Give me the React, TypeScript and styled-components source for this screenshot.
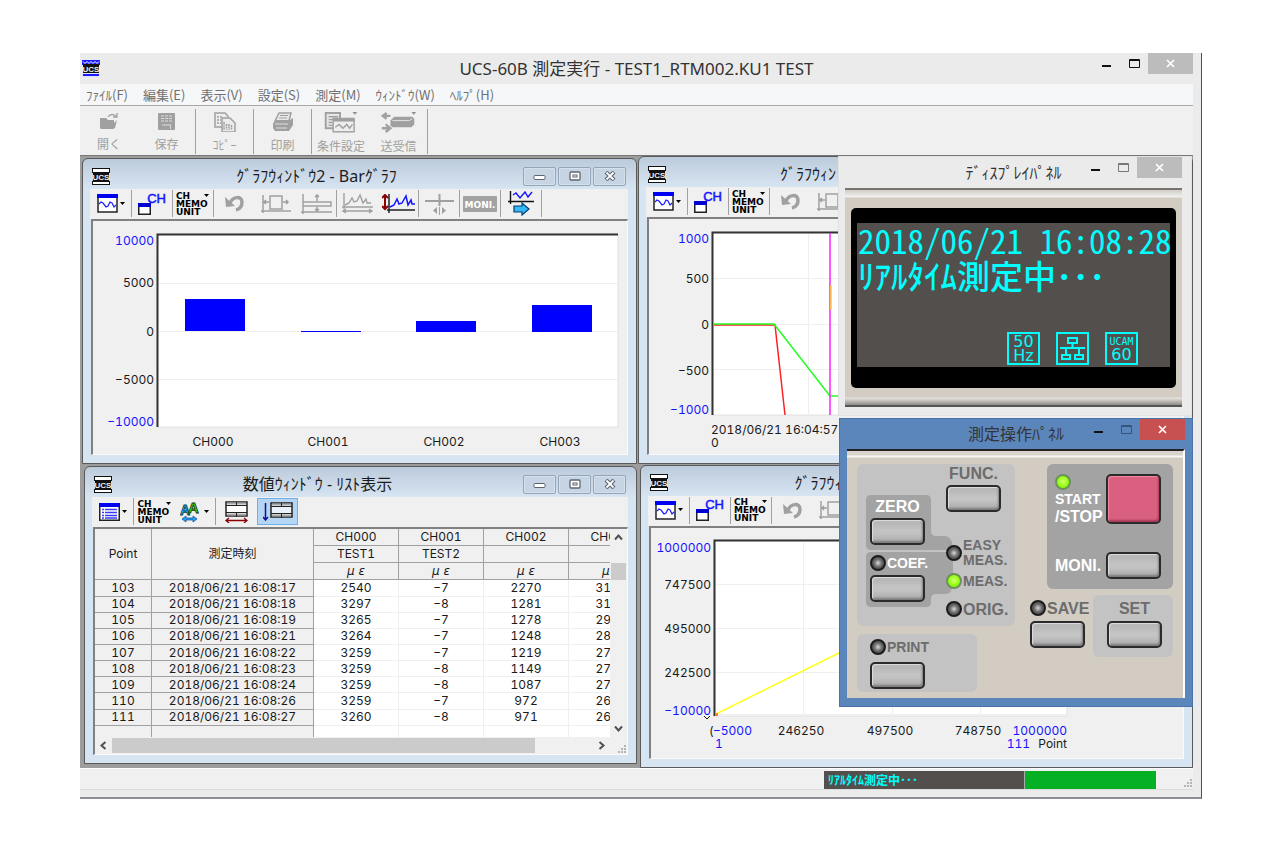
import React from "react";
import styled, { createGlobalStyle, css } from "styled-components";

const UI = `"Noto Sans", "Noto Sans CJK JP", sans-serif`;
const JP = `"Noto Sans CJK JP", sans-serif`;
const DATA = `Inter, "Noto Sans CJK JP", sans-serif`;
const LABEL = `"Liberation Sans", Arial, sans-serif`;

const GlobalStyle = createGlobalStyle`
  * { box-sizing: border-box; }
  body { margin: 0; background: #fff; font-family: ${UI}; color: #222; }
  button { margin: 0; padding: 0; border: 0; background: none; font: inherit; color: inherit; }
  svg { display: block; }
`;

/* ---------- application frame ---------- */

const Page = styled.div`
  min-height: 100vh;
  padding: 53px 82px 57px 80px;
  display: flex;
`;

const AppWindow = styled.div`
  position: relative;
  flex: 1;
  min-width: 0;
  display: flex;
  flex-direction: column;
  background: #ebebeb;
  border-right: 1px solid #4c4f58;
  border-bottom: 2px solid #8b8e95;
  padding: 0 8px 7px 0;
`;

const TitleBar = styled.header`
  display: grid;
  grid-template-columns: 1fr auto 1fr;
  height: 31px;
  flex: none;
`;

const TitleText = styled.h1<{ $size?: number }>`
  margin: 0;
  align-self: center;
  font: 400 ${(p) => p.$size ?? 17}px/24px ${UI};
  color: #333;
  white-space: nowrap;
`;

const TitleIcon = styled.div`
  align-self: center;
  padding-left: 2px;
`;

const Caption = styled.div`
  display: flex;
  justify-content: flex-end;
  align-items: flex-start;
`;

const CaptionButton = styled.button<{ $close?: string; $tone?: string }>`
  width: ${(p) => (p.$close ? 45 : 28)}px;
  height: 21px;
  display: grid;
  place-items: center;
  background: ${(p) => p.$close ?? "transparent"};
  color: ${(p) => (p.$close ? "#fff" : p.$tone ?? "#111")};
`;

const MenuBar = styled.nav`
  display: flex;
  gap: 15px;
  height: 21px;
  flex: none;
  padding-left: 6px;
  background: #f5f7f9;
`;

const MenuItem = styled.button`
  font: 13px/20px ${JP};
  color: #707070;
  white-space: nowrap;
`;

const MainToolbar = styled.div`
  display: flex;
  align-items: stretch;
  height: 50px;
  flex: none;
  padding: 3px 0 1px;
  background: #f0f0f0;
  border-top: 1px solid #a9a9a9;
`;

const MainTool = styled.button<{ $sep?: boolean }>`
  width: 58px;
  display: flex;
  flex-direction: column;
  align-items: center;
  border-right: ${(p) => (p.$sep ? "1px solid #a0a0a0" : "0")};
  font: 12px/16px ${JP};
  color: #a0a0a0;
  white-space: nowrap;
  svg { margin: 3px 0 5px; }
`;

/* ---------- child windows ---------- */

const Workspace = styled.main`
  flex: 1;
  display: flex;
  min-height: 560px;
  background: #9d9d9d;
  border-top: 1px solid #777;
`;

const Column = styled.div<{ $inset?: boolean }>`
  flex: 1 1 0;
  min-width: 0;
  display: flex;
  flex-direction: column;
  gap: ${(p) => (p.$inset ? 2 : 1)}px;
  padding: ${(p) => (p.$inset ? "2px 1px 4px 2px" : "0")};
`;

const ChildFrame = styled.section<{ $indent?: boolean; $grow: number }>`
  flex: ${(p) => p.$grow} 1 0;
  min-height: 0;
  margin-left: ${(p) => (p.$indent ? 2 : 0)}px;
  display: flex;
  flex-direction: column;
  border: 1px solid #5a5a5a;
  border-radius: 6px 6px 0 0;
  padding: 0 8px 8px 7px;
  background: linear-gradient(#bccbdb, #d7e4f2 30px);
  overflow: hidden;
`;

const ChildTitle = styled.div`
  display: flex;
  align-items: center;
  height: 30px;
  flex: none;
  padding: 4px 2px 0 2px;
`;

const ChildTitleText = styled.h2`
  flex: 1;
  margin: 0;
  text-align: center;
  font: 400 16px/22px ${UI};
  color: #1c1c1c;
  white-space: nowrap;
`;

const ChildButtons = styled.div`
  display: flex;
  gap: 2px;
`;

const ChildButton = styled.button`
  width: 33px;
  height: 19px;
  display: grid;
  place-items: center;
  border: 1px solid #93a5ba;
  border-radius: 2px;
  background: #c6d4e4;
  box-shadow: inset 0 0 0 1px #d6e1ed;
`;

const ToolStrip = styled.div`
  display: flex;
  height: 30px;
  flex: none;
  padding: 1px 0 2px 1px;
  background: #f0f0f0;
`;

const Tool = styled.button<{ $sep?: boolean; $active?: boolean }>`
  flex: none;
  width: 41px;
  display: flex;
  align-items: center;
  justify-content: center;
  border-right: ${(p) => (p.$sep ? "1px solid #a0a0a0" : "0")};
  ${(p) =>
    p.$active &&
    css`
      background: #b5d5f5;
      border: 1px solid #6fb0ea;
    `}
`;

const UnitLabel = styled.span`
  width: 34px;
  font: 700 9px/8px "DejaVu Sans", sans-serif;
  color: #000;
  text-align: left;
  span { display: flex; justify-content: space-between; align-items: center; }
`;

const Client = styled.div`
  flex: 1;
  min-height: 0;
  margin-left: 1px;
  overflow: hidden;
  background: #f0f0f0;
  border: 1px solid #fafafa;
  border-top: 2px solid #808080;
  border-left: 2px solid #808080;
`;

/* ---------- table ---------- */

const ListArea = styled.div`
  height: 100%;
  display: grid;
  grid-template-columns: 1fr 17px;
  grid-template-rows: 1fr 17px;
`;

const TableClip = styled.div`
  overflow: hidden;
  min-width: 0;
  min-height: 0;
`;

const Table = styled.table`
  table-layout: fixed;
  width: 559px;
  height: 100%;
  border-collapse: separate;
  border-spacing: 0;
  background: #fff;
  font: 12px/14px ${DATA};
  font-variant-numeric: tabular-nums;
  color: #1a1a1a;
  th, td {
    padding: 0;
    height: 16px;
    font-weight: 400;
    text-align: center;
    white-space: nowrap;
    border-right: 1px solid #efefef;
    border-bottom: 1px solid #efefef;
  }
  th {
    background: #f0f0f0;
    border-color: #a0a0a0;
  }
  thead th { height: 17px; }
  .filler > * { height: 11px; border-bottom: 0; }
`;

const Unit = styled.i`
  font: italic 12px/14px "DejaVu Sans", sans-serif;
  white-space: pre;
`;

const Scroll = styled.div<{ $vertical?: boolean }>`
  display: flex;
  flex-direction: ${(p) => (p.$vertical ? "column" : "row")};
  background: #f0f0f0;
  color: #505050;
`;

const ScrollArrow = styled.button`
  width: 17px;
  height: 17px;
  flex: none;
  display: grid;
  place-items: center;
`;

const ScrollTrack = styled.div<{ $vertical?: boolean }>`
  flex: 1;
  padding: ${(p) => (p.$vertical ? "17px 1px 0" : "1px 0")};
`;

const ScrollThumb = styled.div<{ $vertical?: boolean }>`
  background: #cbcbcb;
  ${(p) => (p.$vertical ? "height: 17px;" : "height: 100%; width: 88%;")}
`;

/* ---------- status bar ---------- */

const StatusBar = styled.footer`
  display: flex;
  justify-content: flex-end;
  align-items: flex-end;
  height: 22px;
  flex: none;
  background: #f0f0f0;
  border-top: 1px solid #fff;
  border-bottom: 1px solid #dcdcdc;
`;

const StatusText = styled.div`
  width: 201px;
  height: 18px;
  padding-left: 4px;
  background: #524f4d;
  border-right: 1px solid #aaa;
  font: 700 12px/17px ${JP};
  color: #00ffff;
  white-space: nowrap;
`;

const StatusProgress = styled.div`
  width: 131px;
  height: 18px;
  background: #06b025;
`;

const GripSlot = styled.div`
  width: 37px;
  display: flex;
  justify-content: flex-end;
  padding-bottom: 1px;
`;

const GripCorner = styled.div`
  display: flex;
  justify-content: flex-end;
  align-items: flex-end;
`;

/* ---------- floating panels ---------- */

const FloatingPanel = styled.section<{ $top: number; $active?: boolean }>`
  position: absolute;
  top: ${(p) => p.$top}px;
  right: ${(p) => (p.$active ? 8 : 9)}px;
  width: 354px;
  padding: 0 ${(p) => (p.$active ? 7 : 9)}px 8px ${(p) => (p.$active ? 7 : 6)}px;
  background: ${(p) => (p.$active ? "#5b86bb" : "#ebebeb")};
  border: 1px solid ${(p) => (p.$active ? "#4a74a9" : "#e2e2e2")};
`;

const PanelTitle = styled(TitleBar)<{ $h: number }>`
  height: ${(p) => p.$h}px;
`;

const DisplayBody = styled.div`
  padding: 18px 6px 17px;
  background: linear-gradient(#cfccc6, #f2f1ee 7px, #d2ccc3 8px, #d2ccc3 calc(100% - 8px), #e6e3df calc(100% - 7px), #8d8983);
  border-top: 2px solid #77736d;
  border-bottom: 2px solid #555;
`;

const DisplayBezel = styled.div`
  padding: 15px 6px 21px;
  background: #000;
  border-radius: 5px;
`;

const DisplayScreen = styled.div`
  height: 144px;
  padding: 0 0 2px 1px;
  display: flex;
  flex-direction: column;
  background: #524f4d;
  color: #00ffff;
`;

const DisplayLine = styled.div`
  height: 35px;
  font: 400 33px/35px ${JP};
  font-feature-settings: "hwid";
  white-space: nowrap;
`;

const DisplayStatus = styled(DisplayLine)`
  font-weight: 500;
`;

const DisplayIcons = styled.div`
  margin-top: auto;
  padding-right: 32px;
  display: flex;
  justify-content: flex-end;
  gap: 16px;
`;

const DisplayIcon = styled.div`
  width: 33px;
  height: 33px;
  border: 2px solid #00ffff;
  display: flex;
  flex-direction: column;
  align-items: center;
  justify-content: center;
  font: 400 16px/14px "DejaVu Sans", sans-serif;
  small { font: 10px/12px "DejaVu Sans Mono", monospace; }
`;

const ControlBody = styled.div`
  display: flex;
  justify-content: space-between;
  align-items: flex-start;
  padding: 13px 10px 6px;
  background: linear-gradient(#d8d4cd 4px, #f6f5f2 5px, #f6f5f2 6px, #d2ccc3 7px);
  border-top: 2px solid #222;
  border-right: 2px solid #fff;
`;

const Stack = styled.div<{ $gap: number; $end?: boolean }>`
  display: flex;
  flex-direction: column;
  align-items: ${(p) => (p.$end ? "flex-end" : "flex-start")};
  gap: ${(p) => p.$gap}px;
`;

const FuncGroup = styled.div`
  position: relative;
  display: flex;
  width: 158px;
  height: 162px;
  padding-left: 9px;
  background: #c3c3c3;
  border-radius: 6px;
`;

const GroupShape = styled.svg`
  position: absolute;
  inset: 0;
`;

const ZeroCoef = styled.div`
  position: relative;
  width: 65px;
  padding: 34px 4px 0;
  display: flex;
  flex-direction: column;
  gap: 10px;
`;

const FuncColumn = styled.div`
  position: relative;
  flex: 1;
  padding: 1px 0 0 15px;
`;

const ModeList = styled.div`
  margin-top: 27px;
`;

const ModeRow = styled.div`
  display: flex;
  align-items: center;
  gap: 1px;
  height: 28px;
`;

const Field = styled.div<{ $gap?: number }>`
  display: flex;
  flex-direction: column;
  gap: ${(p) => p.$gap ?? 4}px;
  width: 55px;
`;

const FieldLabel = styled.div<{ $light?: boolean; $small?: boolean; $center?: boolean }>`
  display: flex;
  align-items: center;
  justify-content: ${(p) => (p.$center ? "center" : "flex-start")};
  gap: 1px;
  min-height: 16px;
  font: 700 ${(p) => (p.$small ? 14 : 16)}px/15px ${LABEL};
  color: ${(p) => (p.$light ? "#fff" : "#6c6c6c")};
  white-space: nowrap;
`;

const Led = styled.span<{ $on?: boolean }>`
  flex: none;
  width: 16px;
  height: 16px;
  border-radius: 50%;
  border: 2px solid ${(p) => (p.$on ? "#6f8f5c" : "#1c1c1c")};
  background: ${(p) =>
    p.$on
      ? "radial-gradient(circle at 50% 45%, #d8ff70, #8cff0a 60%)"
      : "radial-gradient(circle, #d8d8d8, #6c6c6c 45%, #3c3c3c 90%)"};
`;

const Key = styled.button<{ $red?: boolean }>`
  width: 55px;
  height: ${(p) => (p.$red ? 50 : 27)}px;
  border: 2px solid #2b2b2b;
  border-radius: 5px;
  background: ${(p) => (p.$red ? "#d9607f" : "linear-gradient(#b2b2b2, #c4c4c4 45%, #c2c2c2 60%, #a8a8a8)")};
  box-shadow: inset 1px 1px 1px ${(p) => (p.$red ? "#ee8ba2" : "#dedede")}, inset -1px -2px 2px ${(p) => (p.$red ? "#a83a58" : "#7d7d7d")};
`;

const PrintGroup = styled.div`
  width: 120px;
  padding: 5px 0 3px 13px;
  background: #c3c3c3;
  border-radius: 6px;
`;

const StartGroup = styled.div`
  width: 126px;
  height: 125px;
  padding: 10px 12px 10px 8px;
  display: flex;
  flex-direction: column;
  justify-content: space-between;
  background: #a3a3a3;
  border-radius: 6px;
`;

const StartRow = styled.div`
  display: flex;
  justify-content: space-between;
  align-items: center;
`;

const SaveSetRow = styled.div`
  display: flex;
  align-items: flex-start;
  gap: 8px;
`;

const SaveBox = styled.div`
  padding-top: 5px;
`;

const SetBox = styled.div`
  padding: 5px 11px 9px 14px;
  background: #c3c3c3;
  border-radius: 6px;
`;

/* ---------- icons ---------- */

const Logo = ({ color = "#fff" }: { color?: string }) => (
  <svg width="18" height="17" viewBox="0 0 18 17" aria-hidden="true">
    <rect x="0.5" y="0.5" width="17" height="4" fill={color} stroke={color === "#fff" ? "#111" : color} />
    <rect x="1" y="4" width="16" height="10" fill="#111" />
    <text x="9" y="12" textAnchor="middle" fontFamily="Liberation Sans" fontWeight="700" fontSize="8" fill="#eee">UCS</text>
    <rect x="0.5" y="13.5" width="17" height="3" fill={color} stroke={color === "#fff" ? "#111" : "#dfe3ff"} />
    {color !== "#fff" && <path d="M1 1.5l2 2 2-2 2 2 2-2 2 2 2-2 2 2 2-2" stroke="#fff" fill="none" />}
  </svg>
);

const MinGlyph = () => (
  <svg width="9" height="21" viewBox="0 0 9 21"><rect y="12" width="9" height="2" fill="#111" /></svg>
);
const MaxGlyph = () => (
  <svg width="11" height="9" viewBox="0 0 11 9"><path d="M.5 .5h10v8h-10zM.5 1.5h10" fill="none" stroke="currentColor" /></svg>
);
const CloseGlyph = () => (
  <svg width="9" height="9" viewBox="0 0 9 9"><path d="M1 1l7 7M8 1l-7 7" stroke="currentColor" strokeWidth="1.7" /></svg>
);

const Caret = ({ gap = 2 }: { gap?: number }) => (
  <svg width={6 + gap} height="4" viewBox={`${-gap} 0 ${6 + gap} 4`}><path d="M0 0h5L2.500 3z" fill="#000" /></svg>
);

const WaveWindowIcon = () => (
  <svg width="21" height="19" viewBox="0 0 21 19">
    <rect x="1" y="1" width="19" height="17" fill="#fff" stroke="#222" strokeWidth="1.500" />
    <rect x="0" y="0" width="21" height="4" fill="#0000f0" />
    <path d="M2 10l2-2 2 1 3 4 2-1 2-4 2 1 2 4 2-2" fill="none" stroke="#2222ff" strokeWidth="1.300" />
  </svg>
);

const ListWindowIcon = () => (
  <svg width="21" height="18" viewBox="0 0 21 18">
    <rect x=".75" y=".75" width="19.500" height="16.500" fill="#fff" stroke="#222" strokeWidth="1.500" />
    <rect width="21" height="4" fill="#0000f0" />
    <path d="M3 6.500h2m1 0h12M3 9.500h2m1 0h12M3 12.500h2m1 0h12M3 15h2m1 0h12" stroke="#3a3aff" strokeWidth="1.500" />
  </svg>
);

const ChannelIcon = () => (
  <svg width="28" height="24" viewBox="0 0 28 24">
    <rect x=".75" y="11.750" width="11.500" height="10.500" fill="#fff" stroke="#222" strokeWidth="1.500" />
    <rect x="0" y="11" width="13" height="4" fill="#0000d0" />
    <text x="28" y="11" textAnchor="end" fontFamily="Liberation Sans" fontSize="13" stroke="#1414ff" strokeWidth=".5" fill="#1414ff">CH</text>
  </svg>
);

const UndoIcon = () => (
  <svg width="20" height="17" viewBox="0 0 20 17">
    <path d="M5 8C8 1 17 1 17 7c0 4-2 7-6 8" fill="none" stroke="#a0a0a0" strokeWidth="3.500" />
    <path d="M0 2l1 10 9-1z" fill="#a0a0a0" />
  </svg>
);

const ExpandXIcon = () => (
  <svg width="30" height="20" viewBox="0 0 30 20" fill="none" stroke="#a0a0a0" strokeWidth="1.500">
    <path d="M2 1v18M0 17h30M9 2h12v13H9zM8 8H3m2-2l-2 2 2 2M22 8h5m-2-2l2 2-2 2" />
  </svg>
);

const ExpandYIcon = () => (
  <svg width="31" height="20" viewBox="0 0 31 20" fill="none" stroke="#a0a0a0" strokeWidth="1.500">
    <path d="M2 0v20M0 18h31M2 8h28v4H2zM16 7V1m-2 2l2-2 2 2M16 13v4m-2-2l2 2 2-2" />
  </svg>
);

const ScaleXIcon = () => (
  <svg width="32" height="21" viewBox="0 0 32 21" fill="none" stroke="#a0a0a0" strokeWidth="1.400">
    <path d="M2 0v16M0 14h31M3 12l4-2 3-5 2 4 3-1 3-6 3 8 3-4 1 4h4M1 18h29M4 16l-3 2 3 2M27 16l3 2-3 2" />
  </svg>
);

const ScaleYIcon = () => (
  <svg width="33" height="19" viewBox="0 0 33 19" fill="none" strokeWidth="1.500">
    <path d="M7 0v19M5 16h28" stroke="#222" />
    <path d="M3 1v14M0 4l3-3 3 3M0 12l3 3 3-3" stroke="#8b0000" strokeWidth="2" />
    <path d="M8 13l4-2 3-6 2 5 3-1 4-7 2 9 3-5 1 4h3" stroke="#1414ff" />
  </svg>
);

const CursorIcon = () => (
  <svg width="29" height="22" viewBox="0 0 29 22">
    <path d="M14.500 1v12M0 8h29" stroke="#a0a0a0" strokeWidth="2" />
    <path d="M14.500 14v8" stroke="#a0a0a0" />
    <path d="M12 14v7l-4-3.500zM17 14v7l4-3.500z" fill="#a0a0a0" />
  </svg>
);

const MoniIcon = () => (
  <svg width="34" height="16" viewBox="0 0 34 16">
    <rect width="34" height="16" rx="1" fill="#a3a3a3" />
    <text x="17" y="12" textAnchor="middle" fontFamily="DejaVu Sans" fontWeight="700" fontSize="9" fill="#fff">MONI.</text>
  </svg>
);

const WaveArrowIcon = () => (
  <svg width="26" height="25" viewBox="0 0 26 25">
    <path d="M2.500 0v13M0 10.500h26" stroke="#111" strokeWidth="1.400" />
    <path d="M5 4l3-2 4 5 5-6 3 5 4-5" fill="none" stroke="#1414ff" strokeWidth="1.400" />
    <path d="M6 15h8v-3l7 6-7 6v-3H6z" fill="#35b8f5" stroke="#003c78" strokeWidth="1.200" />
  </svg>
);

const FontSizeIcon = () => (
  <svg width="20" height="22" viewBox="0 0 20 22">
    <text x="0" y="14" fontFamily="Liberation Sans" fontWeight="700" fontSize="14" fill="#29b4ff" stroke="#003c50" strokeWidth=".8">A</text>
    <text x="8" y="12" fontFamily="Liberation Sans" fontWeight="700" fontSize="15" fill="#55d02a" stroke="#0a3c00" strokeWidth=".8">A</text>
    <path d="M2 18l4-3v2h7v-2l4 3-4 3v-2H6v2z" fill="#2a9df5" stroke="#004a90" strokeWidth=".7" />
  </svg>
);

const FitWidthIcon = () => (
  <svg width="23" height="22" viewBox="0 0 23 22">
    <rect x="1" y="1" width="21" height="14" fill="#fff" stroke="#222" strokeWidth="1.500" />
    <path d="M2 2.500h19M2 13.500h19" stroke="#aaa" strokeWidth="2" />
    <path d="M1 4.500h21M1 11.500h21M11.500 1v3M11.500 12v4" stroke="#222" />
    <path d="M1 19.500h21M4 17l-3 2.500L4 22M19 17l3 2.500-3 2.500" fill="none" stroke="#8b0000" strokeWidth="1.300" />
  </svg>
);

const FitHeightIcon = () => (
  <svg width="30" height="19" viewBox="0 0 30 19">
    <rect x="8" y="1" width="21" height="14" fill="#e9f2fb" stroke="#222" strokeWidth="1.500" />
    <path d="M9 2.500h19M9 13.500h19" stroke="#aaa" strokeWidth="2" />
    <path d="M8 4.500h21M8 11.500h21M18.500 1v3M18.500 12v4" stroke="#222" />
    <path d="M2.500 1v17M0 15l2.500 3L5 15" fill="none" stroke="#10109a" strokeWidth="1.500" />
  </svg>
);

const OpenIcon = () => (
  <svg width="18" height="19" viewBox="0 0 18 19">
    <path d="M0 6h6l2 2h6v3l3-3-2 8-2 1H1L0 16z" fill="#a0a0a0" />
    <path d="M8 5c2-3 5-3 8-1M17 1v4h-4" fill="none" stroke="#a0a0a0" strokeWidth="1.300" />
  </svg>
);
const SaveIcon = () => (
  <svg width="17" height="19" viewBox="0 0 17 19">
    <rect y="1" width="17" height="17" rx="1" fill="#a0a0a0" />
    <path d="M3 4h11M3 6.500h11M3 9h11" stroke="#dcdcdc" strokeDasharray="3 1" fill="none" />
    <path d="M4 13h9M12.500 13v4" stroke="#dcdcdc" fill="none" />
  </svg>
);
const CopyIcon = () => (
  <svg width="22" height="20" viewBox="0 0 22 20" fill="#ececec" stroke="#a0a0a0" strokeWidth="1.500">
    <path d="M1 1h10l3 3v11H1z" />
    <path d="M3 5h6M3 8h4M3 11h4" strokeDasharray="2 1" />
    <path d="M8 6h8l5 5v9H8z" />
    <path d="M10 10v8m2.500-6v6m2.500-6v6m2.500-5v5" strokeDasharray="2 .6" />
  </svg>
);
const PrintIcon = () => (
  <svg width="22" height="20" viewBox="0 0 22 20">
    <path d="M7 1h12l-2 8H3z" fill="#e8e8e8" stroke="#a0a0a0" strokeWidth="1.500" />
    <path d="M8 3.500h8M7 6h8" stroke="#a0a0a0" />
    <path d="M4 8h14l3-2v7l-4 6H3l-2-3v-5z" fill="#a0a0a0" />
    <path d="M3 12h13M4 16h11" stroke="#dedede" />
  </svg>
);
const ConditionIcon = () => (
  <svg width="34" height="22" viewBox="0 0 34 22">
    <rect x="1" y="1" width="15" height="16" fill="#e6e6e6" stroke="#a0a0a0" strokeWidth="2" />
    <path d="M4 5h10M4 8h5M4 11h4M4 14h4" stroke="#a0a0a0" strokeWidth="1.500" />
    <rect x="8.750" y="6.750" width="22" height="14" fill="#eee" stroke="#a0a0a0" strokeWidth="1.500" />
    <path d="M9 8.500h22" stroke="#a0a0a0" strokeWidth="3" />
    <path d="M11 16l4-3 4 4 4-4 3 4 3-4" fill="none" stroke="#a0a0a0" strokeWidth="1.500" />
    <path d="M29 0h5l-2.500 3z" fill="#909090" />
  </svg>
);
const TransferIcon = () => (
  <svg width="36" height="22" viewBox="0 0 36 22">
    <path d="M9 4H2M5 1L1 4l4 3M0 17h7M4 13l5 4-5 4" fill="none" stroke="#a0a0a0" strokeWidth="2.500" />
    <path d="M13 5h19l2 2v6l-3 3H11l-2-2V9z" fill="#a0a0a0" />
    <path d="M11 9h18l3-2" stroke="#e4e4e4" fill="none" />
    <path d="M31 0h5l-2.500 3z" fill="#909090" />
  </svg>
);

const Grip = () => (
  <svg width="10" height="10" viewBox="0 0 10 10">
    <path d="M7 1h2v2H7zM4 4h2v2H4zM7 4h2v2H7zM1 7h2v2H1zM4 7h2v2H4zM7 7h2v2H7z" fill="#b4b4b4" />
  </svg>
);

const Chevron = ({ d }: { d: string }) => (
  <svg width="9" height="9" viewBox="0 0 9 9"><path d={d} fill="none" stroke="currentColor" strokeWidth="2" /></svg>
);

/* ---------- shared pieces ---------- */

const CaptionControls = ({ close, tone }: { close: string; tone?: string }) => (
  <Caption>
    <CaptionButton aria-label="Minimize"><MinGlyph /></CaptionButton>
    <CaptionButton aria-label="Maximize" $tone={tone}><MaxGlyph /></CaptionButton>
    <CaptionButton aria-label="Close" $close={close}><CloseGlyph /></CaptionButton>
  </Caption>
);

const UnitTool = ({ sep }: { sep?: boolean }) => (
  <Tool $sep={sep}>
    <UnitLabel>
      <span>CH <Caret gap={0} /></span>
      <span>MEMO</span>
      <span>UNIT</span>
    </UnitLabel>
  </Tool>
);

const GraphTools = () => (
  <ToolStrip>
    <Tool $sep aria-label="Graph type"><WaveWindowIcon /><Caret /></Tool>
    <Tool $sep aria-label="Channels"><ChannelIcon /></Tool>
    <UnitTool sep />
    <Tool aria-label="Undo"><UndoIcon /></Tool>
    <Tool aria-label="Expand X"><ExpandXIcon /></Tool>
    <Tool $sep aria-label="Expand Y"><ExpandYIcon /></Tool>
    <Tool aria-label="Auto scale X"><ScaleXIcon /></Tool>
    <Tool $sep aria-label="Auto scale Y"><ScaleYIcon /></Tool>
    <Tool $sep aria-label="Cursor"><CursorIcon /></Tool>
    <Tool $sep aria-label="Monitor"><MoniIcon /></Tool>
    <Tool $sep aria-label="Scroll"><WaveArrowIcon /></Tool>
  </ToolStrip>
);

const ListTools = () => (
  <ToolStrip>
    <Tool $sep aria-label="List type"><ListWindowIcon /><Caret /></Tool>
    <UnitTool />
    <Tool $sep aria-label="Font size"><FontSizeIcon /><Caret gap={4} /></Tool>
    <Tool aria-label="Fit width"><FitWidthIcon /></Tool>
    <Tool $active aria-label="Fit height"><FitHeightIcon /></Tool>
  </ToolStrip>
);

type ChildProps = {
  title: string;
  grow: number;
  indent?: boolean;
  tools: React.ReactNode;
  children: React.ReactNode;
};

const ChildWindow = ({ title, grow, indent, tools, children }: ChildProps) => (
  <ChildFrame $grow={grow} $indent={indent}>
    <ChildTitle>
      <Logo />
      <ChildTitleText>{title}</ChildTitleText>
      <ChildButtons>
        <ChildButton aria-label="Minimize">
          <svg width="13" height="12"><rect x="1" y="5.500" width="11" height="4" rx="1" fill="#fff" stroke="#5e6570" /></svg>
        </ChildButton>
        <ChildButton aria-label="Restore">
          <svg width="12" height="10"><rect x="1" y="1" width="10" height="8" rx="1" fill="#fff" stroke="#5e6570" strokeWidth="1.300" /><rect x="4" y="4" width="4" height="2" fill="#fff" stroke="#5e6570" /></svg>
        </ChildButton>
        <ChildButton aria-label="Close">
          <svg width="12" height="10"><path d="M2 1l8 8M10 1l-8 8" stroke="#5e6570" strokeWidth="4" /><path d="M2.500 1.500l7 7M9.500 1.500l-7 7" stroke="#fff" strokeWidth="1.800" /></svg>
        </ChildButton>
      </ChildButtons>
    </ChildTitle>
    {tools}
    <Client>{children}</Client>
  </ChildFrame>
);

/* ---------- charts ---------- */

const BLUE = "#1414ff";
const INK = "#1a1a1a";

type TickLabel = [text: string, x: number, y: number, color?: string, anchor?: "start" | "middle" | "end"];

const ChartText = styled.text`
  font: 12px ${DATA};
  font-variant-numeric: tabular-nums;
`;

const Labels = ({ items }: { items: TickLabel[] }) => (
  <>
    {items.map(([text, x, y, color = INK, anchor = "end"]) => (
      <ChartText key={text + x + y} x={x} y={y} fill={color} textAnchor={anchor} dominantBaseline="central">{text}</ChartText>
    ))}
  </>
);

const Plot = ({ x, y, w, h }: { x: number; y: number; w: number; h: number }) => (
  <>
    <rect x={x} y={y} width={w} height={h} fill="#fff" stroke="#e0e0e0" />
    <path d={`M${x + 0.5} ${y + h}V${y + 0.5}H${x + w}`} fill="none" stroke="#333" strokeWidth="2" />
  </>
);

const BarChart = () => (
  <svg width="535" height="234" role="img" aria-label="Bar graph">
    <Plot x={64} y={13} w={461} h={193} />
    <path d="M66 62.500H525M66 110.500H525M66 158.500H525" stroke="#efefef" />
    {[[92, 78, 32], [208, 110, 1], [323, 100, 11], [439, 84, 27]].map(([x, y, h]) => (
      <rect key={x} x={x} y={y} width="60" height={h} fill="#0000ff" />
    ))}
    <Labels
      items={[
        ["10000", 61, 19, BLUE],
        ["5000", 61, 61],
        ["0", 61, 110],
        ["−5000", 61, 158],
        ["−10000", 61, 200, BLUE],
        ["CH000", 120, 220, INK, "middle"],
        ["CH001", 235, 220, INK, "middle"],
        ["CH002", 351, 220, INK, "middle"],
        ["CH003", 467, 220, INK, "middle"],
      ]}
    />
  </svg>
);

const TimeChart = () => (
  <svg width="535" height="236" role="img" aria-label="Time graph">
    <Plot x={63} y={13} w={461} h={183} />
    <path d="M65 59.500H524M65 105.500H524M65 150.500H524M159.500 15V196M256.500 15V196" stroke="#efefef" />
    <path d="M65 106H126L136 196" fill="none" stroke="#ff2020" strokeWidth="1.500" />
    <path d="M65 105H125L181 177H260" fill="none" stroke="#20ff20" strokeWidth="1.500" />
    <path d="M181 14V196" stroke="#ff20ff" strokeWidth="1.500" />
    <path d="M182 66V91" stroke="#ffd020" strokeWidth="1.500" />
    <Labels
      items={[
        ["1000", 60, 19, BLUE],
        ["500", 60, 59],
        ["0", 60, 105],
        ["−500", 60, 151],
        ["−1000", 60, 190, BLUE],
        ["2018/06/21 16:04:57", 62, 210, INK, "start"],
        ["0", 62, 223, INK, "start"],
      ]}
    />
  </svg>
);

const XYChart = () => (
  <svg width="533" height="230" role="img" aria-label="X-Y graph">
    <Plot x={63} y={12} w={353} h={176} />
    <path d="M65 56.500H416M65 100.500H416M65 144.500H416M65 186.500H416M152.500 14V188M241.500 14V188M329.500 14V188" stroke="#efefef" />
    <path d="M65 186L188 125L416 14" fill="none" stroke="#ffff20" strokeWidth="1.500" />
    <path d="M64 185h3v3h-3z" fill="#ff7a20" />
    <path d="M53 188l3 3 3-3" fill="none" stroke={INK} />
    <Labels
      items={[
        ["1000000", 60, 19, BLUE],
        ["747500", 60, 56],
        ["495000", 60, 100],
        ["242500", 60, 144],
        ["−10000", 60, 182, BLUE],
        ["(", 58, 202, INK, "start"],
        ["−5000", 62, 202, BLUE, "start"],
        ["246250", 150, 202, INK, "middle"],
        ["497500", 239, 202, INK, "middle"],
        ["748750", 327, 202, INK, "middle"],
        ["1000000", 416, 202, BLUE],
        ["1", 64, 215, BLUE, "start"],
        ["111", 379, 215, BLUE],
        ["Point", 416, 215],
      ]}
    />
  </svg>
);

/* ---------- list window ---------- */

const rows: [number, string, number, number, number, number][] = [
  [103, "17", 2540, -7, 2270, 3146],
  [104, "18", 3297, -8, 1281, 3132],
  [105, "19", 3265, -7, 1278, 2928],
  [106, "21", 3264, -7, 1248, 2868],
  [107, "22", 3259, -7, 1219, 2766],
  [108, "23", 3259, -8, 1149, 2744],
  [109, "24", 3259, -8, 1087, 2700],
  [110, "26", 3259, -7, 972, 2688],
  [111, "27", 3260, -8, 971, 2644],
];

const signed = (n: number) => String(n).replace("-", "−");

const ListTable = () => (
  <ListArea>
    <TableClip>
      <Table>
        <colgroup>
          <col style={{ width: 57 }} />
          <col style={{ width: 162 }} />
          <col span={4} style={{ width: 85 }} />
        </colgroup>
        <thead>
          <tr>
            <th rowSpan={3}>Point</th>
            <th rowSpan={3}>測定時刻</th>
            <th>CH000</th><th>CH001</th><th>CH002</th><th>CH003</th>
          </tr>
          <tr><th>TEST1</th><th>TEST2</th><th /><th /></tr>
          <tr>{[0, 1, 2, 3].map((i) => <th key={i}><Unit>μ ε</Unit></th>)}</tr>
        </thead>
        <tbody>
          {rows.map(([point, sec, ...values]) => (
            <tr key={point}>
              <th scope="row">{point}</th>
              <th>2018/06/21 16:08:{sec}</th>
              {values.map((v, i) => <td key={i}>{signed(v)}</td>)}
            </tr>
          ))}
          <tr className="filler"><th /><th /><td /><td /><td /><td /></tr>
        </tbody>
      </Table>
    </TableClip>
    <Scroll $vertical>
      <ScrollArrow aria-label="Scroll up"><Chevron d="M1 6.500l3.500-4L8 6.500" /></ScrollArrow>
      <ScrollTrack $vertical><ScrollThumb $vertical /></ScrollTrack>
      <ScrollArrow aria-label="Scroll down"><Chevron d="M1 2.500l3.500 4L8 2.500" /></ScrollArrow>
    </Scroll>
    <Scroll>
      <ScrollArrow aria-label="Scroll left"><Chevron d="M6.500 1l-4 3.500 4 3.500" /></ScrollArrow>
      <ScrollTrack><ScrollThumb /></ScrollTrack>
      <ScrollArrow aria-label="Scroll right"><Chevron d="M2.500 1l4 3.500-4 3.500" /></ScrollArrow>
    </Scroll>
    <GripCorner><Grip /></GripCorner>
  </ListArea>
);

/* ---------- panels ---------- */

const DisplayPanel = () => (
  <FloatingPanel $top={103}>
    <PanelTitle $h={31}>
      <span />
      <TitleText as="h2" $size={16}>ﾃﾞｨｽﾌﾟﾚｲﾊﾟﾈﾙ</TitleText>
      <CaptionControls close="#bcbcbc" tone="#777" />
    </PanelTitle>
    <DisplayBody>
      <DisplayBezel>
        <DisplayScreen>
          <DisplayLine>2018/06/21 16:08:28</DisplayLine>
          <DisplayStatus>ﾘｱﾙﾀｲﾑ測定中･･･</DisplayStatus>
          <DisplayIcons>
            <DisplayIcon><span>50</span><span>Hz</span></DisplayIcon>
            <DisplayIcon>
              <svg width="27" height="27" viewBox="0 0 27 27" fill="none" stroke="#00ffff" strokeWidth="2">
                <path d="M9 3h9v5H9zM13.500 8v5M1 13h25M7 13v7M20 13v7M3 20h8v4H3zM16 20h8v4h-8z" />
              </svg>
            </DisplayIcon>
            <DisplayIcon><small>UCAM</small><span>60</span></DisplayIcon>
          </DisplayIcons>
        </DisplayScreen>
      </DisplayBezel>
    </DisplayBody>
  </FloatingPanel>
);

const ControlPanel = () => (
  <FloatingPanel $top={365} $active>
    <PanelTitle $h={30}>
      <span />
      <TitleText as="h2" $size={16}>測定操作ﾊﾟﾈﾙ</TitleText>
      <CaptionControls close="#c75050" tone="#34547c" />
    </PanelTitle>
    <ControlBody>
      <Stack $gap={8}>
        <FuncGroup>
          <GroupShape width="158" height="162" fill="#a3a3a3" aria-hidden="true">
            <path d="M14 31H69Q74 31 74 36V67Q74 72 79 72H88Q96 73 96 86H14Q9 86 9 81V36Q9 31 14 31Z" />
            <path d="M14 88H96V120Q95 130 88 130H79Q74 130 74 135V138Q74 143 69 143H14Q9 143 9 138V93Q9 88 14 88Z" />
          </GroupShape>
          <ZeroCoef>
            <Field>
              <FieldLabel $light $center>ZERO</FieldLabel>
              <Key aria-label="ZERO" />
            </Field>
            <Field>
              <FieldLabel $light $small><Led />COEF.</FieldLabel>
              <Key aria-label="COEF." />
            </Field>
          </ZeroCoef>
          <FuncColumn>
            <Field>
              <FieldLabel $center>FUNC.</FieldLabel>
              <Key aria-label="FUNC." />
            </Field>
            <ModeList>
              <ModeRow><Led /><FieldLabel $small>EASY<br />MEAS.</FieldLabel></ModeRow>
              <ModeRow><Led $on /><FieldLabel $small>MEAS.</FieldLabel></ModeRow>
              <ModeRow><Led /><FieldLabel>ORIG.</FieldLabel></ModeRow>
            </ModeList>
          </FuncColumn>
        </FuncGroup>
        <PrintGroup>
          <Field $gap={7}>
            <FieldLabel $small><Led />PRINT</FieldLabel>
            <Key aria-label="PRINT" />
          </Field>
        </PrintGroup>
      </Stack>
      <Stack $gap={6} $end>
        <StartGroup>
          <StartRow>
            <Stack $gap={1}>
              <Led $on />
              <FieldLabel $light $small>START</FieldLabel>
              <FieldLabel $light>/STOP</FieldLabel>
            </Stack>
            <Key $red aria-label="START/STOP" />
          </StartRow>
          <StartRow>
            <FieldLabel $light>MONI.</FieldLabel>
            <Key aria-label="MONI." />
          </StartRow>
        </StartGroup>
        <SaveSetRow>
          <SaveBox>
            <Field $gap={5}>
              <FieldLabel><Led />SAVE</FieldLabel>
              <Key aria-label="SAVE" />
            </Field>
          </SaveBox>
          <SetBox>
            <Field $gap={5}>
              <FieldLabel $center>SET</FieldLabel>
              <Key aria-label="SET" />
            </Field>
          </SetBox>
        </SaveSetRow>
      </Stack>
    </ControlBody>
  </FloatingPanel>
);

const menus = ["ﾌｧｲﾙ(F)", "編集(E)", "表示(V)", "設定(S)", "測定(M)", "ｳｨﾝﾄﾞｳ(W)", "ﾍﾙﾌﾟ(H)"];

export default function App() {
  return (
    <Page>
      <GlobalStyle />
      <AppWindow>
        <TitleBar>
          <TitleIcon><Logo color="#1a1aff" /></TitleIcon>
          <TitleText>UCS-60B 測定実行 - TEST1_RTM002.KU1 TEST</TitleText>
          <CaptionControls close="#bcbcbc" />
        </TitleBar>
        <MenuBar>
          {menus.map((m) => <MenuItem key={m}>{m}</MenuItem>)}
        </MenuBar>
        <MainToolbar>
          <MainTool><OpenIcon />開く</MainTool>
          <MainTool $sep><SaveIcon />保存</MainTool>
          <MainTool $sep><CopyIcon />ｺﾋﾟｰ</MainTool>
          <MainTool $sep><PrintIcon />印刷</MainTool>
          <MainTool><ConditionIcon />条件設定</MainTool>
          <MainTool $sep><TransferIcon />送受信</MainTool>
        </MainToolbar>
        <Workspace>
          <Column $inset>
            <ChildWindow title="ｸﾞﾗﾌｳｨﾝﾄﾞｳ2 - Barｸﾞﾗﾌ" grow={307} tools={<GraphTools />}>
              <BarChart />
            </ChildWindow>
            <ChildWindow title="数値ｳｨﾝﾄﾞｳ - ﾘｽﾄ表示" grow={298} indent tools={<ListTools />}>
              <ListTable />
            </ChildWindow>
          </Column>
          <Column>
            <ChildWindow title="ｸﾞﾗﾌｳｨﾝﾄﾞｳ1 - Y-Timeｸﾞﾗﾌ" grow={308} tools={<GraphTools />}>
              <TimeChart />
            </ChildWindow>
            <ChildWindow title="ｸﾞﾗﾌｳｨﾝﾄﾞｳ3 - X-Yｸﾞﾗﾌ" grow={303} indent tools={<GraphTools />}>
              <XYChart />
            </ChildWindow>
          </Column>
        </Workspace>
        <StatusBar>
          <StatusText>ﾘｱﾙﾀｲﾑ測定中･･･</StatusText>
          <StatusProgress />
          <GripSlot><Grip /></GripSlot>
        </StatusBar>
        <DisplayPanel />
        <ControlPanel />
      </AppWindow>
    </Page>
  );
}
